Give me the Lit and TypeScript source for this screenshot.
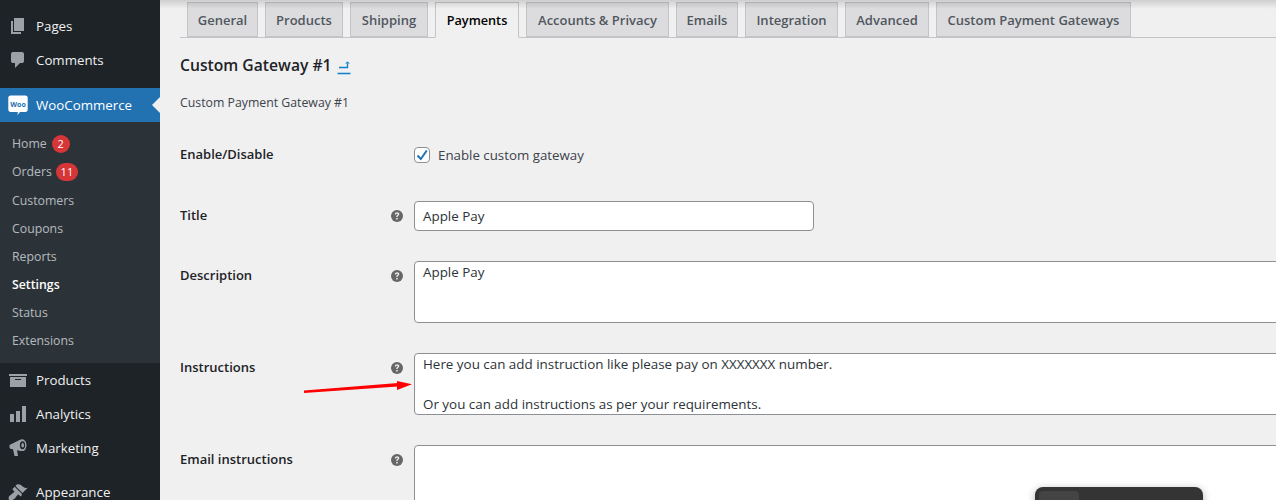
import { LitElement, html, css, svg } from "lit";
import { customElement } from "lit/decorators.js";

const icons: Record<string, unknown> = {
  pages: svg`<path d="M6 15V2h10v13H6zm-1 1h8v2H3V5h2v11z"/>`,
  comments: svg`<path d="M5 2h9q.82 0 1.41.59T16 4v7q0 .82-.59 1.41T14 13h-2l-5 5v-5H5q-.82 0-1.41-.59T3 11V4q0-.82.59-1.41T5 2z"/>`,
  products: svg`<path d="M19 4v2H1V4h18zM2 7h16v10H2V7zm11 3V9H7v1h6z"/>`,
  analytics: svg`<path d="M18 18V2h-4v16h4zm-6 0V7H8v11h4zm-6 0v-8H2v8h4z"/>`,
  marketing: svg`<path d="M1.500 7 12.500 1.500h3v11.500h-3L9 12.200l1 5.800H6.500L5 11.300l-2-.3c-1-.3-1.500-1-1.500-2z"/><ellipse cx="14.500" cy="7.300" rx="4" ry="5.800"/><ellipse cx="14.500" cy="7.300" rx="2.600" ry="4" fill="#1d2327"/><ellipse cx="14.700" cy="7.300" rx="1.300" ry="2.200"/>`,
  appearance: svg`<path d="M14.480 11.060L7.410 3.990l1.500-1.500c.5-.56 2.300-.47 3.510.32 1.210.8 1.430 1.280 2.910 2.100 1.180.64 2.450 1.260 4.450.85zm-.71.71L6.700 4.700 4.930 6.470c-.39.39-.39 1.020 0 1.410l1.060 1.060c.39.39.39 1.030 0 1.420-.6.6-1.430 1.110-2.210 1.690-.35.26-.7.53-1.010.84C1.430 13.230.57 14.900.57 16.170c0 .66.21 1.230.59 1.600.37.37.94.59 1.600.59 1.270 0 2.940-.86 4.310-2.230.31-.31.58-.66.84-1.010.58-.78 1.090-1.610 1.690-2.210.39-.39 1.030-.39 1.420 0l1.060 1.060c.39.39 1.020.39 1.410 0z"/>`,
};

const help = html`<svg class="help" viewBox="0 0 14 14" aria-hidden="true">
  <circle cx="7" cy="7" r="6" fill="#666"/>
  <path d="M4.800 5.400c.1-1.400 1-2.100 2.300-2.100 1.300 0 2.200.8 2.200 1.800 0 1.500-1.700 1.500-1.700 3H6.200c0-2 1.600-2 1.600-2.900 0-.4-.3-.7-.8-.7s-.8.300-.9.900zM6.200 9h1.500v1.600H6.200z" fill="#f0f0f1"/>
</svg>`;

const tabs: [string, number][] = [
  ["General", 71], ["Products", 78], ["Shipping", 78], ["Payments", 84],
  ["Accounts & Privacy", 143], ["Emails", 62], ["Integration", 93], ["Advanced", 84], ["Custom Payment Gateways", 195],
];

@customElement("app-root")
export class AppRoot extends LitElement {
  static styles = css`
    :host { display: block; width: 1276px; height: 500px; overflow: hidden; position: relative; background: #f0f0f1; font-family: "Open Sans", "Noto Sans", sans-serif; font-size: 13px; color: #3c434a; }
    .layout { display: flex; height: 500px; }
    .side { width: 160px; flex: none; background: #1d2327; color: #f0f0f1; font-size: 13.300px; overflow: hidden; }
    .top { display: flex; flex-direction: column; padding-top: 9px; }
    .item { height: 34px; flex: none; display: flex; align-items: center; gap: 8px; padding-left: 8px; box-sizing: border-box; }
    .item svg { width: 20px; height: 20px; flex: none; fill: #9ca1a7; }
    .gap-12 { margin-top: 10px; }
    .woo { height: 34px; background: #2271b1; color: #fff; display: flex; align-items: center; gap: 8px; padding-left: 8px; position: relative; margin-top: 11px; }
    .woo svg { width: 20px; height: 20px; }
    .woo::after { content: ""; position: absolute; right: 0; top: 9px; border: 8px solid transparent; border-right-color: #f0f0f1; border-left-width: 0; }
    .sub { background: #2c3338; padding: 7.750px 0 0; font-size: 12.300px; color: rgba(240,246,252,.7); height: 241px; box-sizing: border-box; display: flex; flex-direction: column; }
    .sub div { height: 28.150px; display: flex; align-items: center; padding-left: 12px; gap: 5px; flex: none; }
    .sub .cur { color: #fff; font-weight: 600; }
    .badge { background: #d63638; color: #fff; border-radius: 9px; font-size: 11px; min-width: 18px; height: 18px; display: inline-flex; align-items: center; justify-content: center; padding: 0 2px; box-sizing: border-box; line-height: 18px; }
    .sub .badge.w { min-width: 22px; margin-left: -1px; }
    .after { display: flex; flex-direction: column; }
    .main { flex: 1; min-width: 0; padding: 2px 0 0 20px; overflow: hidden; position: relative; }
    .main::before { content: ""; position: absolute; left: 0; right: 0; top: 0; height: 9px; background: linear-gradient(rgba(0,0,0,.14), rgba(0,0,0,0)); pointer-events: none; z-index: 1; }
    .tabs { display: flex; border-bottom: 1px solid #c3c4c7; height: 35px; padding-left: 7px; gap: 7px; }
    .tab { height: 35px; box-sizing: border-box; border: 1px solid #c3c4c7; background: #dcdcde; color: #50575e; font-size: 13px; font-weight: 600; display: flex; align-items: center; justify-content: center; white-space: nowrap; flex: none; }
    .tab.on { background: #f0f0f1; color: #000; border-bottom-color: #f0f0f1; height: 36px; font-size: 12.700px; }
    h2 { margin: 0; font-size: 15.700px; font-weight: 600; color: #1d2327; display: flex; align-items: center; gap: 6px; line-height: 22px; padding-top: 16px; }
    h2 svg { width: 14px; height: 14px; margin: 6px 0 0 -1px; }
    .desc { margin: 17px 0 0; line-height: 20px; font-size: 12.300px; }
    .row { display: grid; grid-template-columns: 210px 24px 1fr; }
    .row label { font-weight: 600; color: #1d2327; font-size: 13px; line-height: 20px; padding-top: 4px; }
    .row.r1 label { padding-top: 0; }
    .help { width: 14px; height: 14px; margin-top: 7.500px; }
    .input { width: 400px; height: 30px; box-sizing: border-box; border: 1px solid #8c8f94; border-radius: 4px; background: #fff; padding: 0 8px; display: flex; align-items: center; color: #2c3338; font-size: 13.400px; }
    .area { width: 1000px; height: 62px; box-sizing: border-box; border: 1px solid #8c8f94; border-radius: 4px; background: #fff; padding: 0 8px; color: #2c3338; font-size: 13.400px; line-height: 20px; white-space: pre; }
    .check { display: flex; align-items: center; gap: 8px; font-size: 13.300px; }
    .box { width: 16px; height: 16px; border: 1px solid #8c8f94; border-radius: 4px; background: #fff; box-sizing: border-box; }
    .box svg { display: block; width: 16px; height: 16px; margin: -1px; }
    .r1 { margin-top: 31px; height: 21px; }
    .r2 { margin-top: 36px; }
    .r3 { margin-top: 30px; }
    .r4 { margin-top: 30px; }
    .r5 { margin-top: 30px; }
    .big { height: 120px; }
    .arrow { position: absolute; left: 300px; top: 375px; width: 120px; height: 22px; }
    .popup { position: absolute; left: 1035px; top: 487px; width: 168px; height: 60px; background: #343434; border-radius: 8px; box-shadow: 0 2px 8px rgba(0,0,0,.3); }
    .popup div { margin: 4px; width: 40px; height: 30px; background: #444; border-radius: 4px; }
  `;

  render() {
    return html`<div class="layout">
      <nav class="side">
        <div class="top">
          <div class="item"><svg viewBox="0 0 20 20">${icons.pages}</svg><span>Pages</span></div>
          <div class="item"><svg viewBox="0 0 20 20">${icons.comments}</svg><span>Comments</span></div>
        </div>
        <div class="woo">
          <svg viewBox="0 0 20 20"><path d="M2.500 .5h15c1.200 0 2.200 1 2.200 2.200v12c0 1.200-1 2.200-2.200 2.200h-5.500l-2.500 3 .3-3H2.500c-1.200 0-2.200-1-2.200-2.200v-12C.3 1.500 1.300.5 2.500.5z" fill="#fff"/><text x="10" y="11.500" font-size="7" font-weight="700" text-anchor="middle" fill="#2271b1" font-family="Open Sans">Woo</text></svg>
          WooCommerce
        </div>
        <div class="sub">
          <div>Home <span class="badge">2</span></div>
          <div>Orders <span class="badge w">11</span></div>
          <div>Customers</div><div>Coupons</div><div>Reports</div>
          <div class="cur">Settings</div><div>Status</div><div>Extensions</div>
        </div>
        <div class="after">
          <div class="item"><svg viewBox="0 0 20 20">${icons.products}</svg><span>Products</span></div>
          <div class="item"><svg viewBox="0 0 20 20">${icons.analytics}</svg><span>Analytics</span></div>
          <div class="item"><svg viewBox="0 0 20 20">${icons.marketing}</svg><span>Marketing</span></div>
          <div class="item gap-12"><svg viewBox="0 0 20 20">${icons.appearance}</svg><span>Appearance</span></div>
        </div>
      </nav>
      <main class="main">
        <div class="tabs">${tabs.map(([t, w]) => html`<div class="tab ${t === "Payments" ? "on" : ""}" style="width:${w}px">${t}</div>`)}</div>
        <h2>Custom Gateway #1
          <svg viewBox="0 0 14 14"><path d="M.5 12.500h13M2 6.500h8.500V2.500" stroke="#0f80c8" stroke-width="1.300" fill="none"/><path d="M8 2.500 10.500.5 13 2.500z" fill="#0f80c8"/></svg>
        </h2>
        <p class="desc">Custom Payment Gateway #1</p>
        <div class="row r1"><label>Enable/Disable</label><span></span>
          <div class="check"><span class="box"><svg viewBox="0 0 16 16"><path d="M3.500 8.500 6.800 12 12.800 3.500" stroke="#2271b1" stroke-width="2" fill="none"/></svg></span>Enable custom gateway</div></div>
        <div class="row r2"><label>Title</label>${help}<div class="input">Apple Pay</div></div>
        <div class="row r3"><label>Description</label>${help}<div class="area">Apple Pay</div></div>
        <div class="row r4"><label>Instructions</label>${help}<div class="area">Here you can add instruction like please pay on XXXXXXX number.

Or you can add instructions as per your requirements.</div></div>
        <div class="row r5"><label>Email instructions</label>${help}<div class="area big"></div></div>
      </main>
    </div>
    <svg class="arrow" viewBox="0 0 120 22"><path d="M4 15.500 4 18 98 11.500 98 8z" fill="#f00"/><path d="M97 6 112 9.200 97 15z" fill="#f00"/></svg>
    <div class="popup"><div></div></div>`;
  }
}
